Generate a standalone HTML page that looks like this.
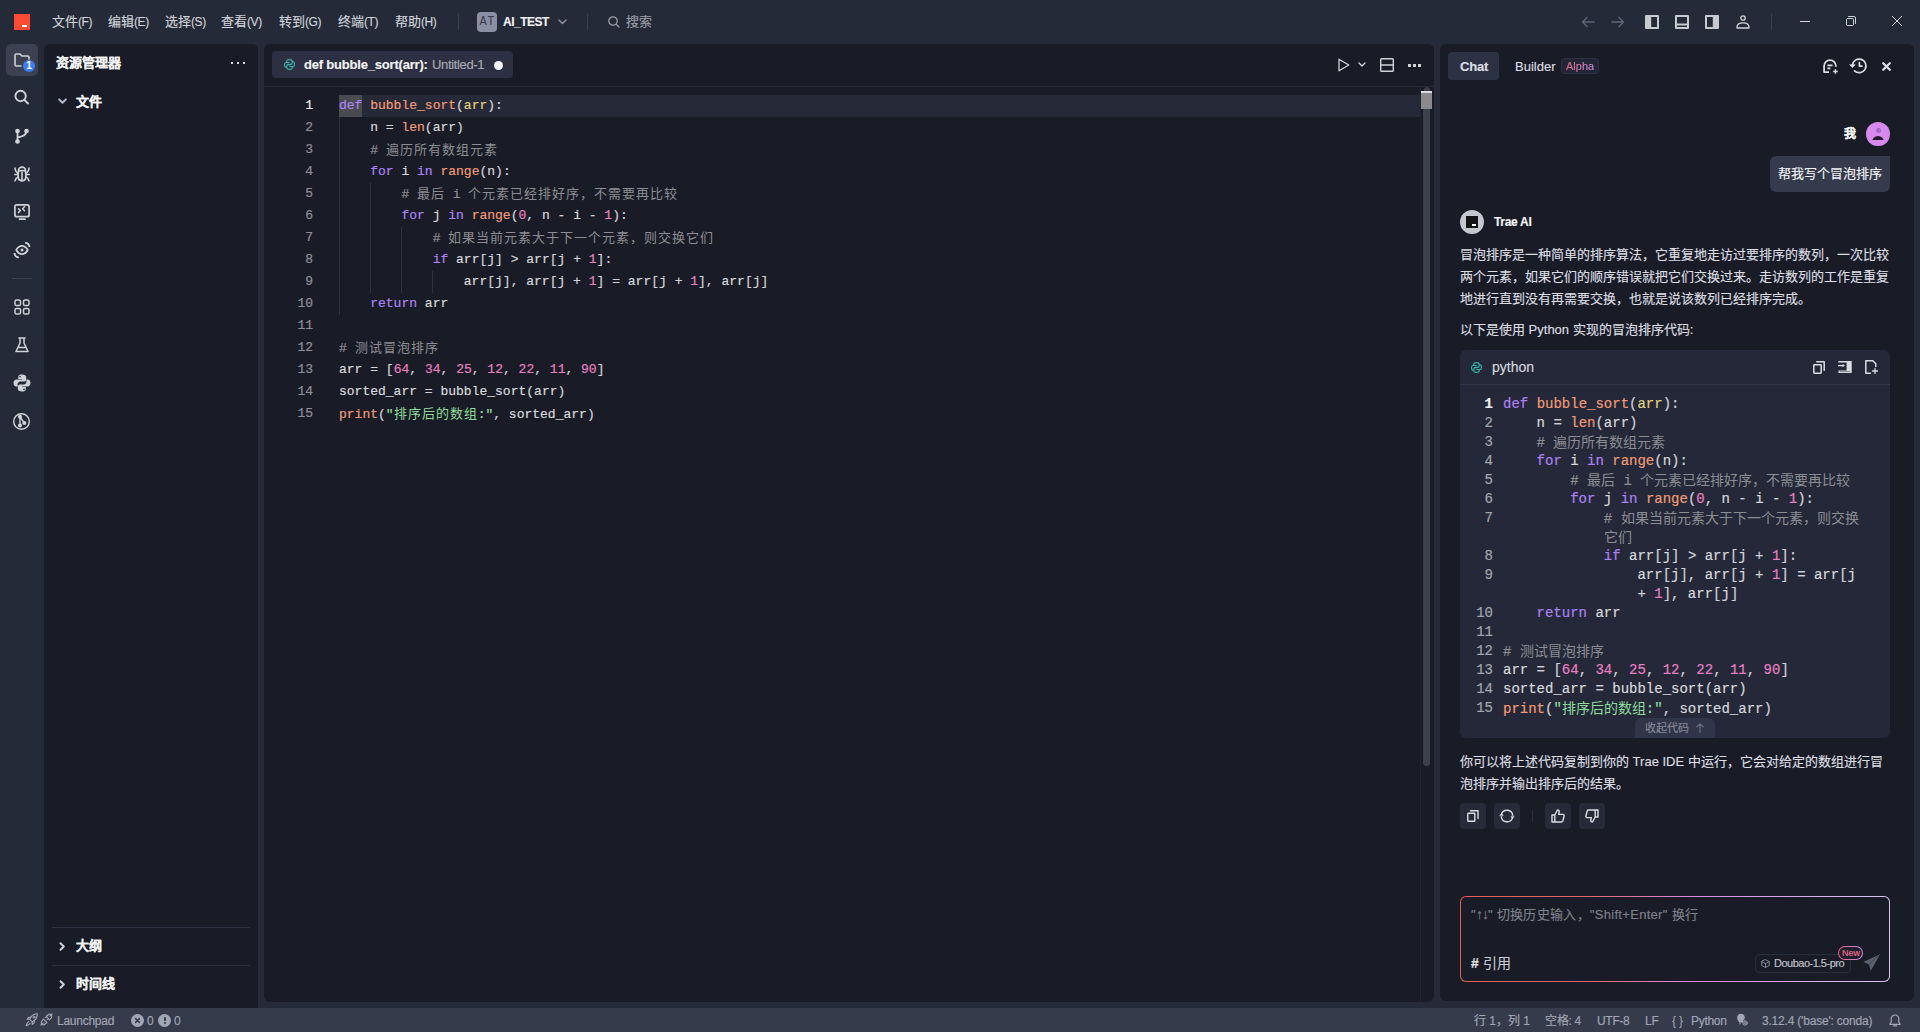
<!DOCTYPE html>
<html lang="zh-CN"><head><meta charset="utf-8">
<style>
*{margin:0;padding:0;box-sizing:border-box}
html,body{width:1920px;height:1032px;overflow:hidden;background:#242a38;font-family:"Liberation Sans",sans-serif;color:#d6d8de;font-size:13px}
.abs{position:absolute}
svg.i{position:absolute;overflow:visible;fill:none;stroke:#d0d2d8;stroke-width:1.5;stroke-linecap:round;stroke-linejoin:round}
.t{position:absolute;white-space:nowrap;line-height:16px;-webkit-text-stroke:0.15px currentColor}
#side{left:44px;top:44px;width:214px;height:964px;background:#191c26;border-radius:6px 6px 0 0}
#editor{left:264px;top:44px;width:1170px;height:958px;background:#191c26;border-radius:6px}
#chat{left:1440px;top:44px;width:474px;height:957px;background:#191c26;border-radius:6px}
#status{left:0;top:1008px;width:1920px;height:24px;background:#363b4c}
.mono{font-family:"Liberation Mono",monospace;-webkit-text-stroke:0.2px currentColor}
.ln{position:absolute;width:60px;text-align:right;color:#9a9ca4}
.cl{position:absolute;white-space:pre}
.cj{letter-spacing:1px;font-family:"Liberation Sans",sans-serif;-webkit-text-stroke:0}
.cj2{font-family:"Liberation Sans",sans-serif;-webkit-text-stroke:0}
.kw{color:#ac82f2}.fn{color:#ef9a76}.pa{color:#e2d183}.cm{color:#8c8d93}.nu{color:#e67fc2}.st{color:#8edc9c}.pu{color:#cfd1d8}
</style></head><body>
<!-- TITLE BAR -->
<div class="abs" style="left:14px;top:14px;width:16px;height:16px;background:#ff4b36"></div>
<div class="abs" style="left:22px;top:25px;width:5px;height:2px;background:#fff"></div>
<div class="t" style="left:52px;top:14px;color:#d0d2d8">文件<span style="font-size:12px;letter-spacing:-0.4px">(F)</span></div>
<div class="t" style="left:108px;top:14px;color:#d0d2d8">编辑<span style="font-size:12px;letter-spacing:-0.4px">(E)</span></div>
<div class="t" style="left:165px;top:14px;color:#d0d2d8">选择<span style="font-size:12px;letter-spacing:-0.4px">(S)</span></div>
<div class="t" style="left:221px;top:14px;color:#d0d2d8">查看<span style="font-size:12px;letter-spacing:-0.4px">(V)</span></div>
<div class="t" style="left:279px;top:14px;color:#d0d2d8">转到<span style="font-size:12px;letter-spacing:-0.4px">(G)</span></div>
<div class="t" style="left:338px;top:14px;color:#d0d2d8">终端<span style="font-size:12px;letter-spacing:-0.4px">(T)</span></div>
<div class="t" style="left:395px;top:14px;color:#d0d2d8">帮助<span style="font-size:12px;letter-spacing:-0.4px">(H)</span></div>
<div class="abs" style="left:458px;top:14px;width:1px;height:16px;background:#3a3f55"></div>
<div class="abs" style="left:477px;top:12px;width:20px;height:20px;background:#8a8fa3;border-radius:4px;color:#383c4c;font-size:12px;line-height:20px;text-align:center;font-family:'Liberation Mono',monospace;letter-spacing:0.5px;padding-left:0.5px">AT</div>
<div class="t" style="left:503px;top:14px;color:#f0f0f2;font-size:12px;font-weight:bold;letter-spacing:-0.5px">AI_TEST</div>
<svg class="i" style="left:558px;top:19px" width="9" height="6" viewBox="0 0 9 6"><path d="M1 1L4.5 4.5L8 1" stroke="#8a8e9c" stroke-width="1.6"/></svg>
<div class="abs" style="left:587px;top:14px;width:1px;height:16px;background:#3a3f55"></div>
<svg class="i" style="left:608px;top:16px" width="12" height="12" viewBox="0 0 12 12"><circle cx="5" cy="5" r="4.2" stroke="#9a9ca5" stroke-width="1.3"/><path d="M8.2 8.2L11 11" stroke="#9a9ca5" stroke-width="1.3"/></svg>
<div class="t" style="left:626px;top:14px;color:#9a9ca5">搜索</div>

<svg class="i" style="left:1581px;top:16px" width="14" height="12" viewBox="0 0 14 12"><path d="M13 6H1.5M6 1.5L1.5 6L6 10.5" stroke="#5f6577" stroke-width="1.4"/></svg>
<svg class="i" style="left:1611px;top:16px" width="14" height="12" viewBox="0 0 14 12"><path d="M1 6H12.5M8 1.5L12.5 6L8 10.5" stroke="#5f6577" stroke-width="1.4"/></svg>
<svg class="i" style="left:1645px;top:15px" width="14" height="14" viewBox="0 0 14 14"><rect x="0" y="0" width="14" height="14" rx="1" fill="#c9cacf" stroke="none"/><rect x="6.2" y="2" width="5.8" height="10" fill="#242a38" stroke="none"/></svg>
<svg class="i" style="left:1675px;top:15px" width="14" height="14" viewBox="0 0 14 14"><rect x="0" y="0" width="14" height="14" rx="1" fill="#c9cacf" stroke="none"/><rect x="2" y="2" width="10" height="6.5" fill="#242a38" stroke="none"/><rect x="2" y="10.5" width="10" height="1.5" fill="#242a38" stroke="none"/></svg>
<svg class="i" style="left:1705px;top:15px" width="14" height="14" viewBox="0 0 14 14"><rect x="0" y="0" width="14" height="14" rx="1" fill="#c9cacf" stroke="none"/><rect x="2" y="2" width="5.8" height="10" fill="#242a38" stroke="none"/></svg>
<svg class="i" style="left:1736px;top:15px" width="14" height="14" viewBox="0 0 14 14"><circle cx="7" cy="3" r="2.2" stroke="#d0d2d8" stroke-width="1.3"/><path d="M1 12.3C1 9.5 3.5 7.8 7 7.8S13 9.5 13 12.3V13H1Z" stroke="#d0d2d8" stroke-width="1.3"/></svg>
<div class="abs" style="left:1771px;top:14px;width:1px;height:16px;background:#3a3f55"></div>
<div class="abs" style="left:1800px;top:21px;width:10px;height:1px;background:#d0d2d8"></div>
<svg class="i" style="left:1846px;top:16px" width="10" height="10" viewBox="0 0 10 10"><rect x="0.5" y="2.5" width="7" height="7" rx="1" stroke="#d0d2d8" stroke-width="1"/><path d="M2.5 0.5H8A1.5 1.5 0 0 1 9.5 2V7.5" stroke="#d0d2d8" stroke-width="1"/></svg>
<svg class="i" style="left:1892px;top:16px" width="10" height="10" viewBox="0 0 10 10"><path d="M0 0L10 10M10 0L0 10" stroke="#d0d2d8" stroke-width="1" stroke-linecap="butt"/></svg>

<!-- ACTIVITY BAR -->
<div class="abs" style="left:6px;top:44px;width:32px;height:32px;background:#3c4152;border-radius:5px"></div>
<svg class="i" style="left:14px;top:53px" width="16" height="14" viewBox="0 0 16 14"><path d="M7 13H2.5A1.5 1.5 0 0 1 1 11.5V2.5A1.5 1.5 0 0 1 2.5 1H6L8 3H13.5A1.5 1.5 0 0 1 15 4.5V6" stroke-width="1.6"/></svg>
<div class="abs" style="left:23px;top:60px;width:12px;height:12px;border-radius:50%;background:#3d7ef7;color:#fff;font-size:10px;font-weight:bold;line-height:12px;text-align:center">1</div>
<svg class="i" style="left:14px;top:89px" width="16" height="16" viewBox="0 0 16 16"><circle cx="6.6" cy="7" r="5.2" stroke-width="1.9"/><path d="M10.5 11L14 14.5" stroke-width="1.9"/></svg>
<svg class="i" style="left:14px;top:127px" width="16" height="16" viewBox="0 0 16 16"><circle cx="3.5" cy="4" r="1.6" fill="#d0d2d8"/><circle cx="12.5" cy="4" r="1.6" fill="#d0d2d8"/><circle cx="3.5" cy="14.5" r="1.6" fill="#d0d2d8"/><path d="M3.5 4V14.5M12.5 4C12.5 7.5 10 9.5 3.5 10.5" stroke-width="1.8"/></svg>
<svg class="i" style="left:14px;top:166px" width="16" height="16" viewBox="0 0 16 16"><path d="M4.5 4.2A3.5 3 0 0 1 11.5 4.2" stroke-width="1.7"/><path d="M4.2 6.5C4.2 5.2 5.5 4.5 8 4.5S11.8 5.2 11.8 6.5V11C11.8 13.2 10.2 14.8 8 14.8S4.2 13.2 4.2 11Z" stroke-width="1.7"/><path d="M8 6V14.2" stroke-width="1.6"/><path d="M4.2 7C2.5 6.5 1.2 4.5 1 2M11.8 7C13.5 6.5 14.8 4.5 15 2M0.8 8.5H4.2M15.2 8.5H11.8M4.2 11C2.5 11.5 1.5 13 1 14.8M11.8 11C13.5 11.5 14.5 13 15 14.8" stroke-width="1.6"/></svg>
<svg class="i" style="left:14px;top:204px" width="16" height="16" viewBox="0 0 16 16"><rect x="0.9" y="0.9" width="14.2" height="11.8" rx="2" stroke-width="1.7"/><path d="M4.5 4.8L6.4 6.6L4.5 8.6M10.5 2.8L8.6 4.8L10.5 6.8" stroke-width="1.5"/><path d="M5.5 15.2H11" stroke-width="1.7"/></svg>
<svg class="i" style="left:13px;top:241px" width="18" height="18" viewBox="0 0 18 18"><path d="M3.2 9C4.8 6.3 6.8 4.9 9 4.9S13.2 6.3 14.8 9C13.2 11.7 11.2 13.1 9 13.1S4.8 11.7 3.2 9Z" stroke-width="1.7"/><rect x="7.7" y="7.7" width="2.6" height="2.6" fill="#d0d2d8" stroke="none"/><path d="M12.1 1.7A4.3 4.3 0 0 1 16.4 6M1.5 12.1A4.3 4.3 0 0 0 5.8 16.4" stroke-width="1.9" stroke-linecap="butt"/></svg>
<div class="abs" style="left:12px;top:278px;width:20px;height:1px;background:#3a3f52"></div>
<svg class="i" style="left:14px;top:299px" width="16" height="16" viewBox="0 0 16 16"><rect x="1" y="1" width="5.5" height="5.5" rx="1.6" stroke-width="1.5"/><rect x="9.5" y="1" width="5.5" height="5.5" rx="1.6" stroke-width="1.5"/><rect x="1" y="9.5" width="5.5" height="5.5" rx="1.6" stroke-width="1.5"/><rect x="9.5" y="9.5" width="5.5" height="5.5" rx="1.6" stroke-width="1.5"/></svg>
<svg class="i" style="left:15px;top:337px" width="14" height="16" viewBox="0 0 14 16"><path d="M4 1H10M5 1V6L1 14.5H13L9 6V1M3 10.5H11" stroke-width="1.5"/></svg>
<svg class="i" style="left:13px;top:374px" width="18" height="18" viewBox="0 0 18 18"><path d="M8.8 0.5C5.5 0.5 5.2 2 5.2 3V5H9V5.6H3.5C1.8 5.6 0.5 7 0.5 9S1.6 12.5 3.3 12.5H4.6V10.3C4.6 8.8 5.8 7.6 7.3 7.6H11C12.2 7.6 13.2 6.6 13.2 5.4V3C13.2 1.5 11.5 0.5 8.8 0.5Z" fill="#d0d2d8" stroke="none"/><path d="M9.2 17.5C12.5 17.5 12.8 16 12.8 15V13H9V12.4H14.5C16.2 12.4 17.5 11 17.5 9S16.4 5.5 14.7 5.5H13.4V7.7C13.4 9.2 12.2 10.4 10.7 10.4H7C5.8 10.4 4.8 11.4 4.8 12.6V15C4.8 16.5 6.5 17.5 9.2 17.5Z" fill="#d0d2d8" stroke="none"/><circle cx="7" cy="2.6" r="0.8" fill="#242a38" stroke="none"/><circle cx="11" cy="15.4" r="0.8" fill="#242a38" stroke="none"/></svg>
<svg class="i" style="left:13px;top:413px" width="18" height="17" viewBox="0 0 18 17"><circle cx="8.5" cy="8.5" r="7.8" stroke-width="1.4"/><path d="M7 3.5V13M7 4L11.5 10" stroke-width="1.4"/><circle cx="7" cy="3.8" r="1.3" fill="#d0d2d8"/><circle cx="7" cy="12.5" r="1.3" fill="#d0d2d8"/><circle cx="11.3" cy="10" r="1.3" fill="#d0d2d8"/></svg>

<!-- SIDEBAR -->
<div id="side" class="abs"></div>
<div class="t" style="left:56px;top:55px;font-weight:bold;color:#f2f2f4">资源管理器</div>
<div class="abs" style="left:230.75px;top:61.75px;width:2.5px;height:2.5px;background:#d8dade"></div>
<div class="abs" style="left:236.75px;top:61.75px;width:2.5px;height:2.5px;background:#d8dade"></div>
<div class="abs" style="left:242.75px;top:61.75px;width:2.5px;height:2.5px;background:#d8dade"></div>
<svg class="i" style="left:58px;top:98px" width="9" height="7" viewBox="0 0 9 7"><path d="M1.2 1.5L4.5 4.8L7.8 1.5" stroke="#b0b4c8" stroke-width="2"/></svg>
<div class="t" style="left:76px;top:94px;font-weight:bold;color:#f2f2f4">文件</div>
<div class="abs" style="left:52px;top:927px;width:198px;height:1px;background:#2c3040"></div>
<svg class="i" style="left:59px;top:942px" width="7" height="9" viewBox="0 0 7 9"><path d="M1.5 1.2L4.8 4.5L1.5 7.8" stroke="#d0d2d8" stroke-width="2"/></svg>
<div class="t" style="left:76px;top:938px;font-weight:bold;color:#f2f2f4">大纲</div>
<div class="abs" style="left:52px;top:965px;width:198px;height:1px;background:#2c3040"></div>
<svg class="i" style="left:59px;top:980px" width="7" height="9" viewBox="0 0 7 9"><path d="M1.5 1.2L4.8 4.5L1.5 7.8" stroke="#d0d2d8" stroke-width="2"/></svg>
<div class="t" style="left:76px;top:976px;font-weight:bold;color:#f2f2f4">时间线</div>

<!-- EDITOR -->
<div id="editor" class="abs"></div>
<!--EDITOR_CONTENT-->
<div class="abs" style="left:272px;top:51px;width:241px;height:27px;background:#2c3042;border-radius:4px"></div>
<svg class="i" style="left:284.4px;top:59.2px" width="11" height="11" viewBox="0 0 11 11"><path d="M2.8 3.5V2Q2.8 0.6 5.5 0.6Q8.2 0.6 8.2 2.2V4Q8.2 5.4 6.5 5.4H4.5Q2.8 5.4 2.8 7.2V8.2H1.8Q0.6 8.2 0.6 5.5Q0.6 3.5 1.8 3.5H5.2M8.2 7.5V9Q8.2 10.4 5.5 10.4Q2.8 10.4 2.8 8.8V7Q2.8 5.6 4.5 5.6H6.5Q8.2 5.6 8.2 3.8V2.8H9.2Q10.4 2.8 10.4 5.5Q10.4 7.5 9.2 7.5H5.8" stroke="#3ab5b0" stroke-width="1.1"/></svg>
<div class="t" style="left:304px;top:57px;font-weight:bold;color:#f2f2f4;letter-spacing:-0.2px">def bubble_sort(arr):</div>
<div class="t" style="left:432px;top:57px;color:#a8aab2;letter-spacing:-0.35px">Untitled-1</div>
<div class="abs" style="left:494px;top:61px;width:9px;height:9px;border-radius:50%;background:#f4f4f6"></div>
<div class="abs" style="left:264px;top:86px;width:1170px;height:1px;background:#262a37"></div>
<svg class="i" style="left:1338px;top:58px" width="12" height="14" viewBox="0 0 12 14"><path d="M1 1.2V12.8L10.8 7Z" stroke="#d0d2d8" stroke-width="1.3"/></svg>
<svg class="i" style="left:1358px;top:62px" width="8" height="5" viewBox="0 0 8 5"><path d="M1 1L4 4L7 1" stroke="#d0d2d8" stroke-width="1.4"/></svg>
<svg class="i" style="left:1380px;top:58px" width="14" height="14" viewBox="0 0 14 14"><rect x="0.7" y="0.7" width="12.6" height="12.6" rx="0.8" stroke="#d0d2d8" stroke-width="1.4"/><path d="M0.7 7H13.3" stroke="#d0d2d8" stroke-width="1.4"/></svg>
<div class="abs" style="left:1408px;top:64px;width:3px;height:3px;background:#d0d2d8"></div>
<div class="abs" style="left:1413px;top:64px;width:3px;height:3px;background:#d0d2d8"></div>
<div class="abs" style="left:1418px;top:64px;width:3px;height:3px;background:#d0d2d8"></div>
<div class="abs" style="left:339px;top:95px;width:1081px;height:22px;background:#262937"></div>
<div class="abs" style="left:339px;top:95px;width:23px;height:22px;background:#4a4b50"></div>
<div class="abs" style="left:339px;top:117px;width:1px;height:198px;background:#2d3140"></div>
<div class="abs" style="left:370px;top:183px;width:1px;height:110px;background:#2d3140"></div>
<div class="abs" style="left:401px;top:227px;width:1px;height:66px;background:#2d3140"></div>
<div class="abs" style="left:432px;top:271px;width:1px;height:22px;background:#2d3140"></div>
<div class="abs" style="left:1420px;top:87px;width:1px;height:915px;background:#22252f"></div>
<div class="abs" style="left:1423px;top:109px;width:7px;height:657px;background:#3d414b;border-radius:0 0 4px 4px"></div>
<div class="abs" style="left:1424px;top:87px;width:6px;height:6px;background:#3a3d46;border-radius:3px 3px 0 0"></div>
<div class="abs" style="left:1421px;top:91px;width:11px;height:18px;background:#8a8a8c"></div>
<div class="abs" style="left:1421px;top:91px;width:11px;height:2px;background:#dcdcdc"></div>
<div class="ln mono" style="left:253px;top:95px;line-height:22px;color:#e8e8ea">1</div>
<div class="cl mono" style="left:339px;top:95px;line-height:22px;color:#d8d8dc"><span class="kw sel">def</span> <span class="fn">bubble_sort</span><span class="pu">(</span><span class="pa">arr</span><span class="pu">):</span></div>
<div class="ln mono" style="left:253px;top:117px;line-height:22px;color:#8d909a">2</div>
<div class="cl mono" style="left:339px;top:117px;line-height:22px;color:#d8d8dc">    n <span class="pu">=</span> <span class="fn">len</span><span class="pu">(</span>arr<span class="pu">)</span></div>
<div class="ln mono" style="left:253px;top:139px;line-height:22px;color:#8d909a">3</div>
<div class="cl mono" style="left:339px;top:139px;line-height:22px;color:#d8d8dc">    <span class="cm"># <span class="cj">遍历所有数组元素</span></span></div>
<div class="ln mono" style="left:253px;top:161px;line-height:22px;color:#8d909a">4</div>
<div class="cl mono" style="left:339px;top:161px;line-height:22px;color:#d8d8dc">    <span class="kw">for</span> i <span class="kw">in</span> <span class="fn">range</span><span class="pu">(</span>n<span class="pu">):</span></div>
<div class="ln mono" style="left:253px;top:183px;line-height:22px;color:#8d909a">5</div>
<div class="cl mono" style="left:339px;top:183px;line-height:22px;color:#d8d8dc">        <span class="cm"># <span class="cj">最后</span> i <span class="cj">个元素已经排好序，不需要再比较</span></span></div>
<div class="ln mono" style="left:253px;top:205px;line-height:22px;color:#8d909a">6</div>
<div class="cl mono" style="left:339px;top:205px;line-height:22px;color:#d8d8dc">        <span class="kw">for</span> j <span class="kw">in</span> <span class="fn">range</span><span class="pu">(</span><span class="nu">0</span><span class="pu">,</span> n <span class="pu">-</span> i <span class="pu">-</span> <span class="nu">1</span><span class="pu">):</span></div>
<div class="ln mono" style="left:253px;top:227px;line-height:22px;color:#8d909a">7</div>
<div class="cl mono" style="left:339px;top:227px;line-height:22px;color:#d8d8dc">            <span class="cm"># <span class="cj">如果当前元素大于下一个元素，则交换它们</span></span></div>
<div class="ln mono" style="left:253px;top:249px;line-height:22px;color:#8d909a">8</div>
<div class="cl mono" style="left:339px;top:249px;line-height:22px;color:#d8d8dc">            <span class="kw">if</span> arr<span class="pu">[</span>j<span class="pu">]</span> <span class="pu">&gt;</span> arr<span class="pu">[</span>j <span class="pu">+</span> <span class="nu">1</span><span class="pu">]:</span></div>
<div class="ln mono" style="left:253px;top:271px;line-height:22px;color:#8d909a">9</div>
<div class="cl mono" style="left:339px;top:271px;line-height:22px;color:#d8d8dc">                arr<span class="pu">[</span>j<span class="pu">],</span> arr<span class="pu">[</span>j <span class="pu">+</span> <span class="nu">1</span><span class="pu">]</span> <span class="pu">=</span> arr<span class="pu">[</span>j <span class="pu">+</span> <span class="nu">1</span><span class="pu">],</span> arr<span class="pu">[</span>j<span class="pu">]</span></div>
<div class="ln mono" style="left:253px;top:293px;line-height:22px;color:#8d909a">10</div>
<div class="cl mono" style="left:339px;top:293px;line-height:22px;color:#d8d8dc">    <span class="kw">return</span> arr</div>
<div class="ln mono" style="left:253px;top:315px;line-height:22px;color:#8d909a">11</div>
<div class="cl mono" style="left:339px;top:315px;line-height:22px;color:#d8d8dc"></div>
<div class="ln mono" style="left:253px;top:337px;line-height:22px;color:#8d909a">12</div>
<div class="cl mono" style="left:339px;top:337px;line-height:22px;color:#d8d8dc"><span class="cm"># <span class="cj">测试冒泡排序</span></span></div>
<div class="ln mono" style="left:253px;top:359px;line-height:22px;color:#8d909a">13</div>
<div class="cl mono" style="left:339px;top:359px;line-height:22px;color:#d8d8dc">arr <span class="pu">=</span> <span class="pu">[</span><span class="nu">64</span><span class="pu">,</span> <span class="nu">34</span><span class="pu">,</span> <span class="nu">25</span><span class="pu">,</span> <span class="nu">12</span><span class="pu">,</span> <span class="nu">22</span><span class="pu">,</span> <span class="nu">11</span><span class="pu">,</span> <span class="nu">90</span><span class="pu">]</span></div>
<div class="ln mono" style="left:253px;top:381px;line-height:22px;color:#8d909a">14</div>
<div class="cl mono" style="left:339px;top:381px;line-height:22px;color:#d8d8dc">sorted_arr <span class="pu">=</span> bubble_sort<span class="pu">(</span>arr<span class="pu">)</span></div>
<div class="ln mono" style="left:253px;top:403px;line-height:22px;color:#8d909a">15</div>
<div class="cl mono" style="left:339px;top:403px;line-height:22px;color:#d8d8dc"><span class="fn">print</span><span class="pu">(</span><span class="st">"<span class="cj">排序后的数组</span>:"</span><span class="pu">,</span> sorted_arr<span class="pu">)</span></div>
<!--/EDITOR_CONTENT-->

<!-- CHAT -->
<div id="chat" class="abs"></div>
<!--CHAT_CONTENT-->
<div class="abs" style="left:1448px;top:52px;width:51px;height:28px;background:#2d3144;border-radius:4px"></div>
<div class="t" style="left:1460px;top:59px;color:#dcdde2;font-weight:bold;letter-spacing:-0.2px">Chat</div>
<div class="t" style="left:1515px;top:59px;color:#dcdde2">Builder</div>
<div class="abs" style="left:1561px;top:58px;width:38px;height:16px;background:#222636;border:1px solid #2c3144;border-radius:4px"></div>
<div class="t" style="left:1566px;top:58px;font-size:11px;line-height:16px;background:linear-gradient(90deg,#e46a7c,#c98fe6);-webkit-background-clip:text;color:transparent">Alpha</div>
<svg class="i" style="left:1823px;top:59px" width="16" height="15" viewBox="0 0 16 15"><path d="M6 13.1H1.1V7A5.9 5.9 0 0 1 12.9 7V7.8" stroke="#dcdde2" stroke-width="1.8" stroke-linecap="butt"/><path d="M4.4 6.4H9.6M4.4 9.3H7.4" stroke="#dcdde2" stroke-width="1.8" stroke-linecap="butt"/><path d="M12.4 10.2V14.8M10.1 12.5H14.7" stroke="#dcdde2" stroke-width="1.5" stroke-linecap="butt"/></svg>
<svg class="i" style="left:1850px;top:58px" width="17" height="16" viewBox="0 0 17 16"><path d="M2.4 7.2A6.8 6.8 0 1 1 4.5 12.8" stroke="#dcdde2" stroke-width="1.7"/><path d="M0 7L2.4 9.6L4.8 7Z" fill="#dcdde2" stroke="#dcdde2" stroke-width="0.8"/><path d="M9.4 4.6V8.1H12" stroke="#dcdde2" stroke-width="1.7"/></svg>
<svg class="i" style="left:1882px;top:62px" width="9" height="9" viewBox="0 0 9 9"><path d="M1.2 1.2L7.8 7.8M7.8 1.2L1.2 7.8" stroke="#dcdde2" stroke-width="2.3"/></svg>
<div class="t" style="left:1844px;top:126px;font-weight:bold;color:#f4f4f6;font-size:12px">我</div>
<div class="abs" style="left:1866px;top:122px;width:24px;height:24px;border-radius:50%;background:#d68af0;overflow:hidden"><div class="abs" style="left:9.5px;top:6px;width:5px;height:5px;border-radius:50%;background:#a866c4"></div><div class="abs" style="left:6px;top:13.5px;width:12px;height:12px;border-radius:50%;background:#231a2b"></div><div class="abs" style="left:0;top:18px;width:24px;height:8px;background:#d68af0"></div></div>
<div class="abs" style="left:1770px;top:156px;width:120px;height:36px;background:#353a4c;border-radius:6px 0 6px 6px"></div>
<div class="t" style="left:1778px;top:166px;color:#f2f2f4">帮我写个冒泡排序</div>
<div class="abs" style="left:1460px;top:210px;width:24px;height:24px;border-radius:50%;background:#c4c7d0"></div>
<div class="abs" style="left:1466px;top:216px;width:12px;height:12px;background:#141414"></div>
<div class="abs" style="left:1472px;top:224px;width:4px;height:2px;background:#fff"></div>
<div class="t" style="left:1494px;top:214px;font-weight:bold;color:#f4f4f6;font-size:12px;letter-spacing:-0.3px">Trae AI</div>
<div class="t" style="left:1460px;top:247px;color:#dcdde2">冒泡排序是一种简单的排序算法，它重复地走访过要排序的数列，一次比较</div>
<div class="t" style="left:1460px;top:269px;color:#dcdde2">两个元素，如果它们的顺序错误就把它们交换过来。走访数列的工作是重复</div>
<div class="t" style="left:1460px;top:291px;color:#dcdde2">地进行直到没有再需要交换，也就是说该数列已经排序完成。</div>
<div class="t" style="left:1460px;top:322px;color:#dcdde2">以下是使用 Python 实现的冒泡排序代码:</div>
<div class="t" style="left:1460px;top:754px;color:#dcdde2">你可以将上述代码复制到你的 Trae IDE 中运行，它会对给定的数组进行冒</div>
<div class="t" style="left:1460px;top:776px;color:#dcdde2">泡排序并输出排序后的结果。</div>
<div class="abs" style="left:1460px;top:350px;width:430px;height:388px;background:#242838;border-radius:6px;overflow:hidden"><div class="abs" style="left:0;top:34px;width:430px;height:1px;background:#313648"></div></div>
<svg class="i" style="left:1470.6px;top:361.6px" width="11" height="11" viewBox="0 0 11 11"><path d="M2.8 3.5V2Q2.8 0.6 5.5 0.6Q8.2 0.6 8.2 2.2V4Q8.2 5.4 6.5 5.4H4.5Q2.8 5.4 2.8 7.2V8.2H1.8Q0.6 8.2 0.6 5.5Q0.6 3.5 1.8 3.5H5.2M8.2 7.5V9Q8.2 10.4 5.5 10.4Q2.8 10.4 2.8 8.8V7Q2.8 5.6 4.5 5.6H6.5Q8.2 5.6 8.2 3.8V2.8H9.2Q10.4 2.8 10.4 5.5Q10.4 7.5 9.2 7.5H5.8" stroke="#3ab5b0" stroke-width="1.1"/></svg>
<div class="t" style="left:1492px;top:359px;color:#d8d9de;font-size:14px">python</div>
<svg class="i" style="left:1813px;top:360.5px" width="12" height="13" viewBox="0 0 12 13"><rect x="0.8" y="3.8" width="7.4" height="8.4" rx="0.6" stroke="#dcdde2" stroke-width="1.5"/><path d="M3.8 0.8H11.2V9.2" stroke="#dcdde2" stroke-width="1.5"/></svg>
<svg class="i" style="left:1838px;top:361px" width="14" height="12" viewBox="0 0 14 12"><path d="M0.3 0H13.7V12H0.5V9.4H8.6V1.5H0.3Z" fill="#dcdde2" stroke="none"/><rect x="1.8" y="10.3" width="10.4" height="0.8" fill="#6a6e7c" stroke="none"/><path d="M0 4.6H5.8" stroke="#dcdde2" stroke-width="1.3" stroke-linecap="butt"/><path d="M4.6 2.9L7 4.6L4.6 6.3Z" fill="#dcdde2" stroke="none"/></svg>
<svg class="i" style="left:1865px;top:360px" width="13" height="14" viewBox="0 0 13 14"><path d="M5.4 13.2H0.8V0.8H7.8L10.8 3.8V6.6" stroke="#dcdde2" stroke-width="1.5"/><path d="M10 8.6V13.4M7.6 11H12.4" stroke="#dcdde2" stroke-width="1.3"/></svg>
<div class="ln mono" style="left:1433px;top:395px;line-height:19px;font-size:14px;color:#f0f0f2;font-weight:bold">1</div>
<div class="cl mono" style="left:1503px;top:395px;line-height:19px;font-size:14px;color:#d8d8dc"><span class="kw">def</span> <span class="fn">bubble_sort</span><span class="pu">(</span><span class="pa">arr</span><span class="pu">):</span></div>
<div class="ln mono" style="left:1433px;top:414px;line-height:19px;font-size:14px;color:#a3a6ae">2</div>
<div class="cl mono" style="left:1503px;top:414px;line-height:19px;font-size:14px;color:#d8d8dc">    n <span class="pu">=</span> <span class="fn">len</span><span class="pu">(</span>arr<span class="pu">)</span></div>
<div class="ln mono" style="left:1433px;top:433px;line-height:19px;font-size:14px;color:#a3a6ae">3</div>
<div class="cl mono" style="left:1503px;top:433px;line-height:19px;font-size:14px;color:#d8d8dc">    <span class="cm"># <span class="cj2">遍历所有数组元素</span></span></div>
<div class="ln mono" style="left:1433px;top:452px;line-height:19px;font-size:14px;color:#a3a6ae">4</div>
<div class="cl mono" style="left:1503px;top:452px;line-height:19px;font-size:14px;color:#d8d8dc">    <span class="kw">for</span> i <span class="kw">in</span> <span class="fn">range</span><span class="pu">(</span>n<span class="pu">):</span></div>
<div class="ln mono" style="left:1433px;top:471px;line-height:19px;font-size:14px;color:#a3a6ae">5</div>
<div class="cl mono" style="left:1503px;top:471px;line-height:19px;font-size:14px;color:#d8d8dc">        <span class="cm"># <span class="cj2">最后</span> i <span class="cj2">个元素已经排好序，不需要再比较</span></span></div>
<div class="ln mono" style="left:1433px;top:490px;line-height:19px;font-size:14px;color:#a3a6ae">6</div>
<div class="cl mono" style="left:1503px;top:490px;line-height:19px;font-size:14px;color:#d8d8dc">        <span class="kw">for</span> j <span class="kw">in</span> <span class="fn">range</span><span class="pu">(</span><span class="nu">0</span><span class="pu">,</span> n <span class="pu">-</span> i <span class="pu">-</span> <span class="nu">1</span><span class="pu">):</span></div>
<div class="ln mono" style="left:1433px;top:509px;line-height:19px;font-size:14px;color:#a3a6ae">7</div>
<div class="cl mono" style="left:1503px;top:509px;line-height:19px;font-size:14px;color:#d8d8dc">            <span class="cm"># <span class="cj2">如果当前元素大于下一个元素，则交换</span></span></div>
<div class="cl mono" style="left:1503px;top:528px;line-height:19px;font-size:14px;color:#d8d8dc">            <span class="cm"><span class="cj2">它们</span></span></div>
<div class="ln mono" style="left:1433px;top:547px;line-height:19px;font-size:14px;color:#a3a6ae">8</div>
<div class="cl mono" style="left:1503px;top:547px;line-height:19px;font-size:14px;color:#d8d8dc">            <span class="kw">if</span> arr<span class="pu">[</span>j<span class="pu">]</span> <span class="pu">&gt;</span> arr<span class="pu">[</span>j <span class="pu">+</span> <span class="nu">1</span><span class="pu">]:</span></div>
<div class="ln mono" style="left:1433px;top:566px;line-height:19px;font-size:14px;color:#a3a6ae">9</div>
<div class="cl mono" style="left:1503px;top:566px;line-height:19px;font-size:14px;color:#d8d8dc">                arr<span class="pu">[</span>j<span class="pu">],</span> arr<span class="pu">[</span>j <span class="pu">+</span> <span class="nu">1</span><span class="pu">]</span> <span class="pu">=</span> arr<span class="pu">[</span>j</div>
<div class="cl mono" style="left:1503px;top:585px;line-height:19px;font-size:14px;color:#d8d8dc">                <span class="pu">+</span> <span class="nu">1</span><span class="pu">],</span> arr<span class="pu">[</span>j<span class="pu">]</span></div>
<div class="ln mono" style="left:1433px;top:604px;line-height:19px;font-size:14px;color:#a3a6ae">10</div>
<div class="cl mono" style="left:1503px;top:604px;line-height:19px;font-size:14px;color:#d8d8dc">    <span class="kw">return</span> arr</div>
<div class="ln mono" style="left:1433px;top:623px;line-height:19px;font-size:14px;color:#a3a6ae">11</div>
<div class="ln mono" style="left:1433px;top:642px;line-height:19px;font-size:14px;color:#a3a6ae">12</div>
<div class="cl mono" style="left:1503px;top:642px;line-height:19px;font-size:14px;color:#d8d8dc"><span class="cm"># <span class="cj2">测试冒泡排序</span></span></div>
<div class="ln mono" style="left:1433px;top:661px;line-height:19px;font-size:14px;color:#a3a6ae">13</div>
<div class="cl mono" style="left:1503px;top:661px;line-height:19px;font-size:14px;color:#d8d8dc">arr <span class="pu">=</span> <span class="pu">[</span><span class="nu">64</span><span class="pu">,</span> <span class="nu">34</span><span class="pu">,</span> <span class="nu">25</span><span class="pu">,</span> <span class="nu">12</span><span class="pu">,</span> <span class="nu">22</span><span class="pu">,</span> <span class="nu">11</span><span class="pu">,</span> <span class="nu">90</span><span class="pu">]</span></div>
<div class="ln mono" style="left:1433px;top:680px;line-height:19px;font-size:14px;color:#a3a6ae">14</div>
<div class="cl mono" style="left:1503px;top:680px;line-height:19px;font-size:14px;color:#d8d8dc">sorted_arr <span class="pu">=</span> bubble_sort<span class="pu">(</span>arr<span class="pu">)</span></div>
<div class="ln mono" style="left:1433px;top:699px;line-height:19px;font-size:14px;color:#a3a6ae">15</div>
<div class="cl mono" style="left:1503px;top:699px;line-height:19px;font-size:14px;color:#d8d8dc"><span class="fn">print</span><span class="pu">(</span><span class="st">"<span class="cj2">排序后的数组</span>:"</span><span class="pu">,</span> sorted_arr<span class="pu">)</span></div>
<div class="abs" style="left:1635px;top:718px;width:80px;height:20px;background:#30354a;border-radius:6px 6px 0 0"></div>
<div class="t" style="left:1645px;top:720px;font-size:11px;line-height:16px;color:#858896">收起代码</div><svg class="i" style="left:1696px;top:723px" width="8" height="10" viewBox="0 0 8 10"><path d="M4 9.5V1M0.8 4L4 0.8L7.2 4" stroke="#6c7080" stroke-width="1.1"/></svg>
<div class="abs" style="left:1460px;top:803px;width:26px;height:26px;background:#262a39;border-radius:4px"></div>
<div class="abs" style="left:1494px;top:803px;width:26px;height:26px;background:#262a39;border-radius:4px"></div>
<div class="abs" style="left:1545px;top:803px;width:26px;height:26px;background:#262a39;border-radius:4px"></div>
<div class="abs" style="left:1579px;top:803px;width:26px;height:26px;background:#262a39;border-radius:4px"></div>
<div class="abs" style="left:1532px;top:810px;width:1px;height:12px;background:#2a2e3d"></div>
<svg class="i" style="left:1467px;top:810px" width="12" height="12" viewBox="0 0 12 12"><rect x="0.8" y="3.3" width="7" height="7.9" rx="0.5" stroke="#dcdde2" stroke-width="1.4"/><path d="M3.5 0.8H11V8.6" stroke="#dcdde2" stroke-width="1.4"/></svg>
<svg class="i" style="left:1500px;top:809px" width="14" height="14" viewBox="0 0 14 14"><path d="M1.3 7.8A5.8 5.8 0 0 0 12.6 8.6M12.7 6.2A5.8 5.8 0 0 0 1.4 5.4" stroke="#dcdde2" stroke-width="1.3"/><path d="M0 6.6L1.6 4.2L3 6.6Z M14 7.4L12.4 9.8L11 7.4Z" fill="#dcdde2" stroke="#dcdde2" stroke-width="0.6"/></svg>
<svg class="i" style="left:1551px;top:809px" width="14" height="14" viewBox="0 0 14 14"><path d="M1 6H3.8V13H1Z M3.8 6L6.5 1C7.8 1 8.5 2 8.2 3.2L7.6 5.4H12C12.8 5.4 13.3 6.2 13.1 7L11.8 12C11.6 12.6 11.1 13 10.5 13H3.8" stroke="#dcdde2" stroke-width="1.4"/></svg>
<svg class="i" style="left:1585px;top:809px" width="14" height="14" viewBox="0 0 14 14"><path d="M13 8H10.2V1H13Z M10.2 8L7.5 13C6.2 13 5.5 12 5.8 10.8L6.4 8.6H2C1.2 8.6 0.7 7.8 0.9 7L2.2 2C2.4 1.4 2.9 1 3.5 1H10.2" stroke="#dcdde2" stroke-width="1.4"/></svg>
<div class="abs" style="left:1460px;top:896px;width:430px;height:86px;border-radius:6px;background:linear-gradient(90deg,#e45e52 0%,#e36670 30%,#d78ee6 55%,#d8c6ee 100%)"><div class="abs" style="left:1.3px;top:1.3px;right:1.3px;bottom:1.3px;background:#191c26;border-radius:5px"></div></div>
<div class="t" style="left:1471px;top:906px;color:#7d808c;letter-spacing:0.3px">"<b style="font-size:14px;letter-spacing:-1px">↑↓</b>" 切换历史输入，"Shift+Enter" 换行</div>
<div class="t" style="left:1471px;top:955px;color:#c8cad0;font-size:14px"><b style="color:#e0e2e8">#</b><span style="margin-left:4px">引用</span></div>
<div class="abs" style="left:1755px;top:954px;width:96px;height:19px;border:1px solid #2a2e3c;border-radius:4px"></div>
<svg class="i" style="left:1761px;top:958.5px" width="9" height="9" viewBox="0 0 10 10"><path d="M5 0.8L9.2 3V7.2L5 9.4L0.8 7.2V3Z M0.8 3L5 5.2L9.2 3 M5 5.2V9.4" stroke="#9a9ca6" stroke-width="0.9"/></svg>
<div class="t" style="left:1774px;top:955px;font-size:11px;color:#c0c2cc;letter-spacing:-0.5px">Doubao-1.5-pro</div>
<div class="abs" style="left:1838px;top:946px;width:25px;height:14px;border-radius:7px;background:linear-gradient(90deg,#e8607a,#c890f0)"><div class="abs" style="left:1px;top:1px;right:1px;bottom:1px;border-radius:6px;background:#1d1f2c"></div></div>
<div class="t" style="left:1842px;top:946px;font-size:9px;line-height:14px;color:#f07090">New</div>
<svg class="i" style="left:1863px;top:954px" width="17" height="17" viewBox="0 0 17 17"><path d="M17 0.3L0.3 8L5.8 10.3L7.8 16.8Z" fill="#5c6170" stroke="none"/><path d="M17 0.3L5.8 10.3L7.5 12" stroke="#3a3e4a" stroke-width="0.9" fill="none"/></svg>
<!--/CHAT_CONTENT-->

<!-- STATUS -->
<div id="status" class="abs"></div>
<!--STATUS_CONTENT-->
<svg class="i" style="left:25px;top:1013px" width="13" height="14" viewBox="0 0 13 14"><path d="M12.3 0.8C8.8 0.9 6.3 2.8 4.6 6.3L7.2 8.9C10.6 7.2 12.4 4.7 12.3 0.8Z" stroke="#a2a6b4" stroke-width="1.1"/><path d="M4.6 6.3H2L3.8 4.2H6M7.2 8.9V11.5L9.3 9.7V7.6" stroke="#a2a6b4" stroke-width="1.1"/><circle cx="9" cy="4.2" r="1" stroke="#a2a6b4" stroke-width="1"/><path d="M3.6 8.6C2.4 9.4 1.6 10.7 1.2 12.6C3 12.3 4.4 11.6 5.2 10.3" stroke="#a2a6b4" stroke-width="1.1"/></svg>
<svg class="i" style="left:40px;top:1013px" width="13" height="13" viewBox="0 0 13 13"><path d="M0.8 12.2L3 10M10 3L12.2 0.8" stroke="#a2a6b4" stroke-width="1.1"/><path d="M3.5 6.2L6.8 9.5L5.2 11C4.2 12 2.6 11.8 1.8 11.2C1.2 10.4 1 8.8 2 7.8Z" stroke="#a2a6b4" stroke-width="1.1"/><path d="M6.2 3.5L9.5 6.8L11 5.2C12 4.2 11.8 2.6 11.2 1.8C10.4 1.2 8.8 1 7.8 2Z" stroke="#a2a6b4" stroke-width="1.1"/><path d="M4.8 5L6 3.8M6.8 7L8 5.8" stroke="#a2a6b4" stroke-width="1"/></svg>
<div class="t" style="left:57px;top:1013px;font-size:12px;color:#a2a6b4;letter-spacing:-0.25px">Launchpad</div>
<div class="abs" style="left:131px;top:1014px;width:13px;height:13px;border-radius:50%;background:#a2a6b4"></div>
<svg class="i" style="left:135px;top:1018px" width="5" height="5" viewBox="0 0 5 5"><path d="M0.6 0.6L4.4 4.4M4.4 0.6L0.6 4.4" stroke="#363b4c" stroke-width="1.5"/></svg>
<div class="t" style="left:147px;top:1013px;font-size:12px;color:#a2a6b4">0</div>
<div class="abs" style="left:158px;top:1014px;width:13px;height:13px;border-radius:50%;background:#a2a6b4"></div>
<div class="abs" style="left:163.5px;top:1016.8px;width:2px;height:4.6px;background:#363b4c;border-radius:1px"></div><div class="abs" style="left:163.5px;top:1022.4px;width:2px;height:2px;background:#363b4c;border-radius:1px"></div>
<div class="t" style="left:174px;top:1013px;font-size:12px;color:#a2a6b4">0</div>
<div class="t" style="left:1474px;top:1013px;font-size:12px;color:#a2a6b4;letter-spacing:0px">行 1，列 1</div>
<div class="t" style="left:1545px;top:1013px;font-size:12px;color:#a2a6b4;letter-spacing:-0.3px">空格: 4</div>
<div class="t" style="left:1597px;top:1013px;font-size:12px;color:#a2a6b4;letter-spacing:-0.3px">UTF-8</div>
<div class="t" style="left:1645px;top:1013px;font-size:12px;color:#a2a6b4;letter-spacing:-0.2px">LF</div>
<div class="t" style="left:1691px;top:1013px;font-size:12px;color:#a2a6b4;letter-spacing:-0.3px">Python</div>
<div class="t" style="left:1762px;top:1013px;font-size:12px;color:#a2a6b4;letter-spacing:-0.2px">3.12.4 ('base': conda)</div>
<div class="t" style="left:1672px;top:1013px;font-size:12px;color:#a2a6b4;letter-spacing:3px;-webkit-text-stroke:0">{}</div>
<svg class="i" style="left:1736px;top:1013px" width="12" height="13" viewBox="0 0 12 13"><path d="M5 0.8C7.2 0.8 8.8 2.4 8.8 4.5C8.8 6 8 7 7 7.6V8.3C7 9 6.2 9.6 5.5 9.6H4.5V11.5H3.5V9.2C2.2 8.6 1.2 7.2 1.2 4.6C1.2 2.4 2.8 0.8 5 0.8Z" fill="#a2a6b4" stroke="none"/><circle cx="9" cy="10" r="2.2" fill="#363b4c" stroke="#a2a6b4" stroke-width="1"/><path d="M9 9V11M8 10H10" stroke="#a2a6b4" stroke-width="0.8"/></svg>
<svg class="i" style="left:1889px;top:1014px" width="12" height="13" viewBox="0 0 12 13"><path d="M6 1C3.8 1 2.2 2.7 2.2 4.8V8.2L1 9.8V10.4H11V9.8L9.8 8.2V4.8C9.8 2.7 8.2 1 6 1Z M4.5 11.8H7.5" stroke="#a2a6b4" stroke-width="1.2"/></svg>
<!--/STATUS_CONTENT-->
</body></html>
